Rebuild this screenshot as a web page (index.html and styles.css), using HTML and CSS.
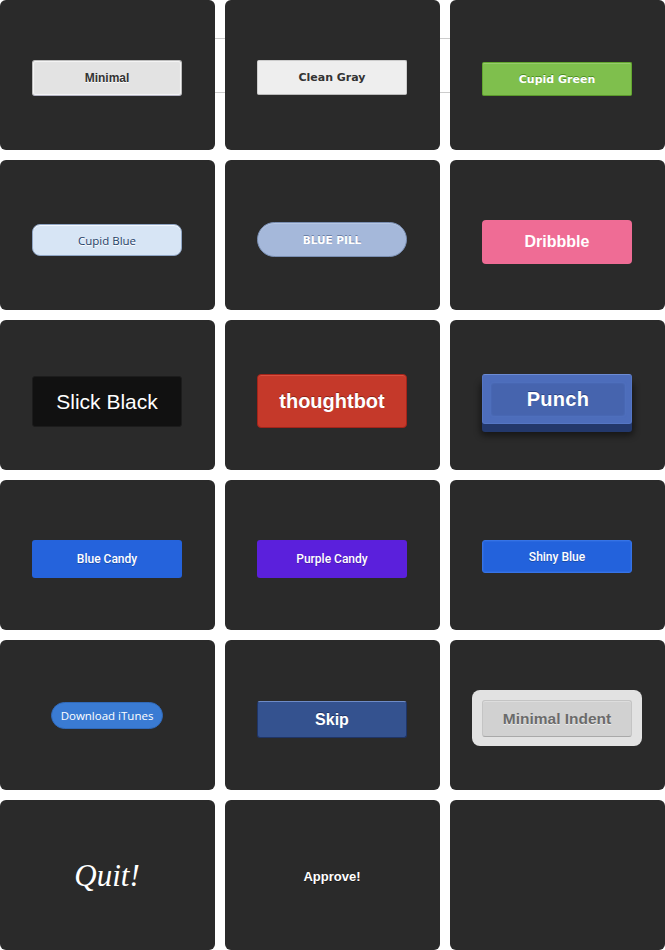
FILE: index.html
```html
<!DOCTYPE html>
<html>
<head>
<meta charset="utf-8">
<link rel="stylesheet" href="styles.css">
</head>
<body>
<div class="grid">
  <div class="tile"><button class="btn minimal">Minimal</button></div>
  <div class="tile"><button class="btn clean-gray">Clean Gray</button></div>
  <div class="tile"><button class="btn cupid-green">Cupid Green</button></div>

  <div class="tile"><button class="btn cupid-blue">Cupid Blue</button></div>
  <div class="tile"><button class="btn blue-pill">Blue Pill</button></div>
  <div class="tile"><button class="btn dribbble">Dribbble</button></div>

  <div class="tile"><button class="btn slick-black">Slick Black</button></div>
  <div class="tile"><button class="btn thoughtbot">thoughtbot</button></div>
  <div class="tile"><button class="btn punch"><span class="punch-inner">Punch</span></button></div>

  <div class="tile"><button class="btn blue-candy">Blue Candy</button></div>
  <div class="tile"><button class="btn purple-candy">Purple Candy</button></div>
  <div class="tile"><button class="btn shiny-blue">Shiny Blue</button></div>

  <div class="tile"><button class="btn itunes">Download iTunes</button></div>
  <div class="tile"><button class="btn skip">Skip</button></div>
  <div class="tile"><div class="indent-wrap"><button class="btn minimal-indent">Minimal Indent</button></div></div>

  <div class="tile"><button class="btn quit">Quit!</button></div>
  <div class="tile"><button class="btn approve">Approve!</button></div>
  <div class="tile"></div>
</div>
</body>
</html>
```
FILE: styles.css
```css
html, body {
  margin: 0;
  padding: 0;
  background: #ffffff;
}

.grid {
  position: relative;
  display: grid;
  grid-template-columns: 215px 215px 215px;
  grid-auto-rows: 150px;
  column-gap: 10px;
  row-gap: 10px;
  width: 665px;
}

.grid::before {
  content: "";
  position: absolute;
  left: 0;
  right: 0;
  top: 38px;
  height: 53px;
  border-top: 1px solid #cccccc;
  border-bottom: 1px solid #cccccc;
  z-index: 0;
}

.tile {
  position: relative;
  z-index: 1;
  box-sizing: border-box;
  padding-right: 1px;
  background: #2a2a2a;
  border-radius: 6px;
  display: flex;
  align-items: center;
  justify-content: center;
}

.btn {
  box-sizing: border-box;
  width: 150px;
  padding: 0;
  margin: 0;
  border: 0;
  display: flex;
  align-items: center;
  justify-content: center;
  font-family: "Liberation Sans", Arial, sans-serif;
  cursor: pointer;
}

/* Row 1 */
.minimal {
  height: 36px;
  margin-top: 6px;
  background: #e3e3e3;
  border: 1px solid #bbbbbb;
  border-bottom-color: #b3b3c3;
  border-radius: 3px;
  box-shadow: inset 0 0 1px 1px #f6f6f6;
  color: #333333;
  font-weight: bold;
  font-size: 12px;
  text-shadow: 0 1px 0 #ffffff;
}

.clean-gray {
  height: 35px;
  margin-top: 5px;
  background: #eeeeee;
  border: 1px solid #cccccc;
  border-bottom-color: #bbbbbb;
  border-radius: 2px;
  color: #333333;
  font-family: "DejaVu Sans", Verdana, sans-serif;
  font-weight: bold;
  font-size: 11px;
  text-shadow: 0 1px 0 #eeeeee;
}

.cupid-green {
  height: 34px;
  margin-top: 8px;
  background: #7fbf4d;
  border: 1px solid #63a62f;
  border-bottom-color: #5b992b;
  border-radius: 2px;
  box-shadow: inset 0 1px 0 0 #96ca6d;
  color: #ffffff;
  font-family: "DejaVu Sans", Verdana, sans-serif;
  font-weight: bold;
  font-size: 11px;
  text-shadow: 0 -1px 0 #4c9021;
}

/* Row 2 */
.cupid-blue {
  height: 32px;
  margin-top: 10px;
  background: #d7e5f5;
  border: 1px solid #8fa5c4;
  border-radius: 8px;
  box-shadow: inset 0 1px 0 0 #f4f8fd;
  color: #1f3e66;
  font-family: "Open Sans", sans-serif;
  font-size: 11.5px;
  text-shadow: 0 1px 0 #ffffff;
}

.blue-pill {
  height: 35px;
  margin-top: 9px;
  background: #a5b8da;
  border: 1px solid #7a8fb3;
  border-radius: 18px;
  box-shadow: inset 0 1px 0 0 #b6c6e2;
  color: #ffffff;
  font-family: "DejaVu Sans", Verdana, sans-serif;
  font-weight: bold;
  font-size: 10.5px;
  text-transform: uppercase;
  text-shadow: 0 -1px 0 #6b80a6;
}

.dribbble {
  height: 44px;
  margin-top: 14px;
  background: #ef6c95;
  border-radius: 4px;
  color: #ffffff;
  font-weight: bold;
  font-size: 16px;
}

/* Row 3 */
.slick-black {
  height: 51px;
  margin-top: 13px;
  background: #111111;
  border: 1px solid #1c1c1c;
  border-radius: 3px;
  color: #ffffff;
  font-size: 21px;
}

.thoughtbot {
  height: 54px;
  margin-top: 12px;
  background: #c5392a;
  border: 1px solid #a3241a;
  border-radius: 4px;
  box-shadow: inset 0 1px 0 0 #d9503f;
  color: #ffffff;
  font-weight: bold;
  font-size: 20px;
  text-shadow: 0 -1px 0 #8a2519;
}

.punch {
  height: 50px;
  margin-top: 8px;
  background: #4d6dbb;
  border: 1px solid #5576c4;
  border-top-color: #6c8bd4;
  border-radius: 3px;
  box-shadow: 0 8px 0 0 #23386b, 0 10px 6px 2px rgba(0, 0, 0, 0.45);
  padding: 8px 6px 7px 8px;
  color: #ffffff;
  font-weight: bold;
  font-size: 20px;
  text-shadow: 0 -1px 0 #2b4487;
}

.punch-inner {
  flex: 1;
  align-self: stretch;
  display: flex;
  align-items: center;
  justify-content: center;
  background: #4664ae;
  border-radius: 3px;
  box-shadow: 0 0 1px 1px #4f6fbd, inset 0 0 2px 0 #5273c0;
  letter-spacing: 0.3px;
}

/* Row 4 */
.blue-candy,
.purple-candy {
  height: 38px;
  margin-top: 8px;
  border-radius: 3px;
  color: #ffffff;
  font-family: Roboto, "Liberation Sans", sans-serif;
  font-weight: 500;
  font-size: 12px;
  text-shadow: 0 1px 0 rgba(0, 0, 0, 0.25);
}

.blue-candy {
  background: #2563dc;
}

.purple-candy {
  background: #5b20dc;
}

.shiny-blue {
  height: 33px;
  margin-top: 3px;
  background: #2362dc;
  border: 1px solid #3673e6;
  border-radius: 3px;
  box-shadow: inset 0 0 0 1px #2a68df;
  color: #ffffff;
  font-family: Roboto, "Liberation Sans", sans-serif;
  font-weight: 500;
  font-size: 12px;
  text-shadow: 0 1px 0 rgba(0, 0, 0, 0.25);
}

/* Row 5 */
.itunes {
  width: 112px;
  height: 27px;
  margin-top: 1px;
  background: #3a7bd3;
  border: 1px solid #2f69b9;
  border-radius: 14px;
  color: #ffffff;
  font-family: "Open Sans", sans-serif;
  font-size: 11.5px;
}

.skip {
  height: 37px;
  margin-top: 9px;
  background: #34528f;
  border: 1px solid #1f3567;
  border-top-color: #6e8bc7;
  border-radius: 3px;
  color: #ffffff;
  font-weight: bold;
  font-size: 16px;
  text-shadow: 0 -1px 0 #1f3567;
}

.indent-wrap {
  margin-top: 6px;
  padding: 10px 10px 9px;
  background: #e2e2e2;
  border-radius: 8px;
  display: flex;
}

.minimal-indent {
  height: 37px;
  background: #d1d1d1;
  border: 1px solid #c4c4c4;
  border-bottom-color: #a9a9a9;
  border-radius: 3px;
  box-shadow: inset 0 1px 0 0 #dddddd;
  color: #6b6b6b;
  font-weight: bold;
  font-size: 15.5px;
  text-shadow: 0 1px 0 #eeeeee;
}

/* Row 6 */
.quit {
  width: auto;
  height: 40px;
  margin-top: 2px;
  background: transparent;
  color: #ffffff;
  font-family: "Liberation Serif", "Times New Roman", serif;
  font-style: italic;
  font-size: 31px;
}

.approve {
  width: auto;
  height: 20px;
  margin-top: 2px;
  background: transparent;
  color: #ffffff;
  font-weight: bold;
  font-size: 13px;
  text-shadow: 0 1px 0 rgba(0, 0, 0, 0.4);
}
```
